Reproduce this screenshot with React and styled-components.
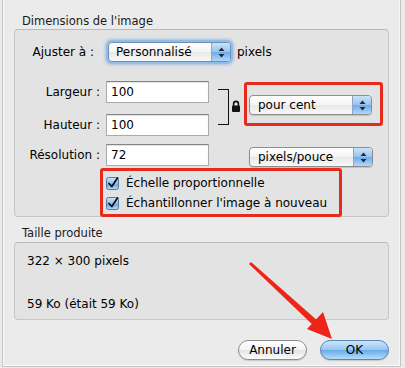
import React from 'react';
import styled, { createGlobalStyle, css } from 'styled-components';

const Global = createGlobalStyle`
  html, body { margin: 0; padding: 0; background: #ebebeb; }
  body { font-family: "DejaVu Sans", "Liberation Sans", sans-serif; color: #000; }
`;

const Screen = styled.div`
  position: relative;
  width: 405px;
  height: 368px;
  overflow: hidden;
  background: #ebebeb;
`;

const Window = styled.div`
  box-sizing: border-box;
  margin-left: 2px;
  width: 399px;
  height: 367px;
  border: 1px solid #c4c4c4;
  border-top: none;
  box-shadow: inset 1px 0 0 #f9f9f9, inset -1px 0 0 #f9f9f9, inset 0 -1px 0 #f9f9f9;
  padding: 15px 11px 0 11px;
  display: flex;
  flex-direction: column;
`;

const GroupLabel = styled.div`
  font-size: 11.5px;
  line-height: 13px;
  padding-left: 8px;
  color: #1a1a1a;
  margin-top: ${p => p.$top || 0}px;
  margin-bottom: ${p => p.$bottom || 1}px;
`;

const GroupBox = styled.div`
  box-sizing: border-box;
  height: ${p => p.$h}px;
  border: 1px solid #c6c6c6;
  border-top-color: #b9b9b9;
  border-radius: 4px;
  background: #e3e3e3;
  padding: ${p => p.$pad};
  display: flex;
  flex-direction: column;
`;

const Label = styled.div`
  box-sizing: border-box;
  font-size: 12px;
  text-align: right;
  padding-right: 6px;
  line-height: 22px;
  white-space: nowrap;
`;

const TopRow = styled.div`
  display: flex;
  align-items: center;
  height: 20px;
`;

const Text = styled.span`
  font-size: 12px;
  margin-left: ${p => p.$ml || 0}px;
`;

const Popup = styled.div`
  box-sizing: border-box;
  width: ${p => p.$w}px;
  height: 20px;
  margin-left: ${p => p.$ml || 0}px;
  margin-top: ${p => p.$mt || 0}px;
  align-self: start;
  border: 1px solid #8e8e8e;
  border-radius: 4px;
  background: linear-gradient(#ffffff, #f4f4f4 50%, #e8e8e8 51%, #f8f8f8);
  box-shadow: 0 1px 1px rgba(0,0,0,0.15);
  display: flex;
  align-items: stretch;
  ${p => p.$focus && css`
    box-shadow: 0 0 0 2px #93bde6, 0 0 3px 3px rgba(120,170,225,0.6);
    border-color: #6b8fb8;
  `}
`;

const PopupText = styled.span`
  flex: 1;
  padding-left: ${p => p.$pl || 8}px;
  font-size: 12px;
  line-height: 18px;
  white-space: nowrap;
`;

const PopupArrows = styled.span`
  width: 18px;
  border-left: 1px solid #8ea6c4;
  border-radius: 0 3px 3px 0;
  background: linear-gradient(#cbe2f8, #98c4ef 50%, #6eaaea 51%, #b2d8f8);
  display: flex;
  align-items: center;
  justify-content: center;
`;

const SizeGrid = styled.div`
  margin-top: 19px;
  display: grid;
  grid-template-columns: 91px 103px 35px auto;
  grid-template-rows: 22px 22px;
  row-gap: 11px;
`;

const ResRow = styled.div`
  margin-top: 8px;
  display: grid;
  grid-template-columns: 91px 103px 35px auto;
  height: 22px;
`;

const Field = styled.div`
  box-sizing: border-box;
  width: 103px;
  height: 22px;
  border: 1px solid #aaaaaa;
  border-top-color: #858585;
  background: #fff;
  box-shadow: inset 0 1px 1px rgba(0,0,0,0.12);
  padding-left: 4px;
  font-size: 12px;
  line-height: 20px;
`;

const Link = styled.div`
  grid-column: 3;
  grid-row: 1 / 3;
  display: flex;
  align-items: flex-start;
  padding-left: 9px;
`;

const Bracket = styled.div`
  box-sizing: border-box;
  margin-top: 8px;
  width: 11px;
  height: 36px;
  border: 1px solid #111;
  border-left: none;
`;

const LockIcon = styled.svg`
  margin-top: 19px;
  margin-left: 2px;
`;

const RedFrame = styled.div`
  box-sizing: border-box;
  border: 3px solid #e52a1e;
  border-radius: 3px;
`;

const UnitFrame = styled(RedFrame)`
  grid-column: 4;
  grid-row: 1 / 3;
  align-self: start;
  margin-top: 1px;
  width: 139px;
  height: 44px;
  padding: 10px 0 0 2px;
`;

const CheckFrame = styled(RedFrame)`
  margin: 2px 0 -1px 85px;
  width: 242px;
  height: 49px;
  padding: 2px 0 0 3px;
  position: relative;
`;

const CheckRow = styled.div`
  display: flex;
  align-items: center;
  height: 20px;
  gap: 6px;
  font-size: 12px;
`;

const InfoLine = styled.div`
  font-size: 12px;
  line-height: 16px;
  padding-left: 12px;
  margin-top: ${p => p.$mt || 0}px;
`;

const ButtonRow = styled.div`
  margin-top: 20px;
  display: flex;
  justify-content: flex-end;
  gap: 13px;
`;

const Button = styled.div`
  box-sizing: border-box;
  width: 69px;
  height: 20px;
  border-radius: 10px;
  border: 1px solid #8c8c8c;
  background: linear-gradient(#ffffff, #f3f3f3 50%, #e4e4e4 51%, #fbfbfb);
  box-shadow: 0 1px 1px rgba(0,0,0,0.15);
  font-size: 12px;
  line-height: 18px;
  text-align: center;
  ${p => p.$primary && css`
    border-color: #5b84b3;
    background: linear-gradient(#cce5fb, #94c6f1 50%, #68a9ea 51%, #b4defb);
  `}
`;

const Arrow = styled.svg`
  position: absolute;
  left: 0;
  top: 0;
  pointer-events: none;
`;

const UpDown = () => (
  <svg width="7" height="11" viewBox="0 0 7 11">
    <path d="M3.5 0.5 L6.5 4 L0.5 4 Z" fill="#1c2a3a" />
    <path d="M3.5 10.5 L6.5 7 L0.5 7 Z" fill="#1c2a3a" />
  </svg>
);

const Check = () => (
  <svg width="14" height="14" viewBox="0 0 14 14">
    <defs>
      <linearGradient id="cbg" x1="0" y1="0" x2="0" y2="1">
        <stop offset="0" stopColor="#cfe5fa" />
        <stop offset="0.5" stopColor="#8ec0ee" />
        <stop offset="0.51" stopColor="#63a4e6" />
        <stop offset="1" stopColor="#b6dbfa" />
      </linearGradient>
    </defs>
    <rect x="0.5" y="1.5" width="12" height="12" rx="2" fill="url(#cbg)" stroke="#58799f" />
    <path d="M3 7.5 L5.8 10.5 L11.5 2" fill="none" stroke="#111" strokeWidth="1.8" strokeLinecap="round" strokeLinejoin="round" />
  </svg>
);

const SelectBox = ({ w, ml, mt, focus, pl, children }) => (
  <Popup $w={w} $ml={ml} $mt={mt} $focus={focus}>
    <PopupText $pl={pl}>{children}</PopupText>
    <PopupArrows><UpDown /></PopupArrows>
  </Popup>
);

export default function App() {
  return (
    <Screen>
      <Global />
      <Window>
        <GroupLabel>Dimensions de l'image</GroupLabel>
        <GroupBox $h={188} $pad="12px 0 0 0">
          <TopRow>
            <Label style={{ width: 85 }}>Ajuster à :</Label>
            <SelectBox w={123} ml={8} focus pl={7}>Personnalisé</SelectBox>
            <Text $ml={6}>pixels</Text>
          </TopRow>
          <SizeGrid>
            <Label>Largeur :</Label>
            <Field>100</Field>
            <Link>
              <Bracket />
              <LockIcon width="10" height="12" viewBox="0 0 10 12">
                <path d="M2.6 6V3.8a2.4 2.4 0 0 1 4.8 0V6" fill="none" stroke="#111" strokeWidth="1.6" />
                <rect x="1" y="5.5" width="8" height="6.5" rx="1" fill="#111" />
              </LockIcon>
            </Link>
            <UnitFrame>
              <SelectBox w={123} pl={8}>pour cent</SelectBox>
            </UnitFrame>
            <Label>Hauteur :</Label>
            <Field>100</Field>
          </SizeGrid>
          <ResRow>
            <Label>Résolution :</Label>
            <Field>72</Field>
            <span />
            <SelectBox w={124} ml={5} mt={3} pl={8}>pixels/pouce</SelectBox>
          </ResRow>
          <CheckFrame>
            <CheckRow><Check />Échelle proportionnelle</CheckRow>
            <CheckRow><Check />Échantillonner l'image à nouveau</CheckRow>
          </CheckFrame>
        </GroupBox>
        <GroupLabel $top={10} $bottom={2}>Taille produite</GroupLabel>
        <GroupBox $h={78} $pad="10px 0 0 0">
          <InfoLine>322 × 300 pixels</InfoLine>
          <InfoLine $mt={27}>59 Ko (était 59 Ko)</InfoLine>
        </GroupBox>
        <ButtonRow>
          <Button>Annuler</Button>
          <Button $primary>OK</Button>
        </ButtonRow>
      </Window>
      <Arrow width="405" height="368" viewBox="0 0 405 368">
        <path d="M249 264 L251 262 L319 322 L315 327 Z" fill="#ee2418" />
        <path d="M332 339 L307 329 L323 312 Z" fill="#ee2418" />
      </Arrow>
    </Screen>
  );
}
